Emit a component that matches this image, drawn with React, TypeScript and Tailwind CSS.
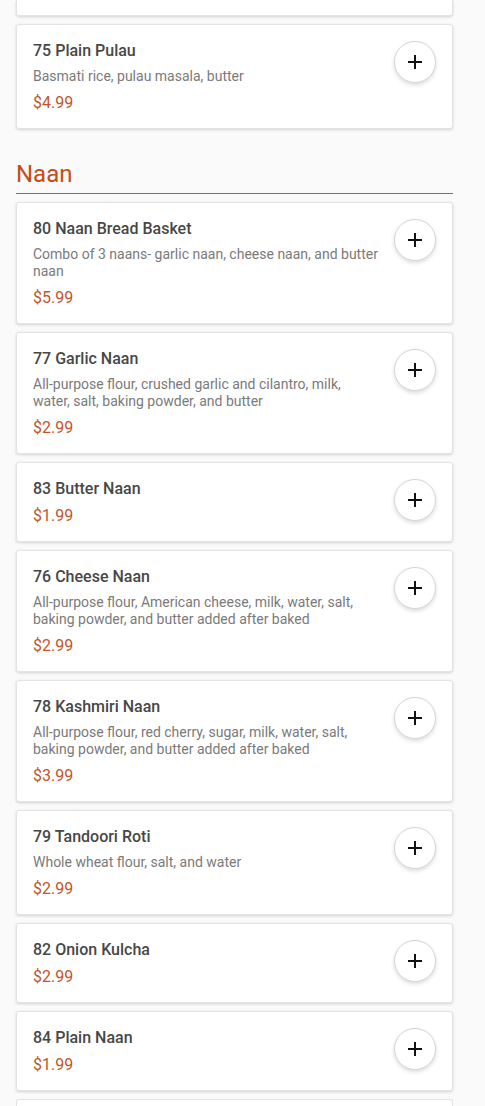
import React from 'react';

type Item = {
  name: string;
  desc?: string;
  price: string;
};

const naan: Item[] = [
  { name: '80 Naan Bread Basket', desc: 'Combo of 3 naans- garlic naan, cheese naan, and butter naan', price: '$5.99' },
  { name: '77 Garlic Naan', desc: 'All-purpose flour, crushed garlic and cilantro, milk, water, salt, baking powder, and butter', price: '$2.99' },
  { name: '83 Butter Naan', price: '$1.99' },
  { name: '76 Cheese Naan', desc: 'All-purpose flour, American cheese, milk, water, salt, baking powder, and butter added after baked', price: '$2.99' },
  { name: '78 Kashmiri Naan', desc: 'All-purpose flour, red cherry, sugar, milk, water, salt, baking powder, and butter added after baked', price: '$3.99' },
  { name: '79 Tandoori Roti', desc: 'Whole wheat flour, salt, and water', price: '$2.99' },
  { name: '82 Onion Kulcha', price: '$2.99' },
  { name: '84 Plain Naan', price: '$1.99' },
];

const PlusIcon = () => (
  <svg width="18" height="18" viewBox="0 0 18 18" fill="none">
    <path d="M9 2v14M2 9h14" stroke="#111" strokeWidth="2" />
  </svg>
);

const MenuCard: React.FC<{ item: Item }> = ({ item }) => (
  <div className="flex gap-4 p-4 bg-white border border-[#e3e3e3] rounded-[3px] shadow-[0_1px_3px_rgba(0,0,0,0.16)]">
    <div className="flex-1 min-w-0">
      <div className="text-[16px] leading-[19px] font-medium text-[#474747]">{item.name}</div>
      {item.desc && (
        <div className="mt-2 text-[14px] leading-[17px] text-[#7a7a7a]">{item.desc}</div>
      )}
      <div className="mt-2 text-[16px] leading-[19px] text-[#c2552a]">{item.price}</div>
    </div>
    <button className="w-[42px] h-[42px] shrink-0 rounded-full bg-white border border-[#d6d6d6] shadow-[0_2px_4px_rgba(0,0,0,0.14)] flex items-center justify-center">
      <PlusIcon />
    </button>
  </div>
);

export default function App() {
  return (
    <div className="h-[1106px] overflow-hidden bg-[#fafafa] font-['Roboto',sans-serif]">
      <div className="ml-4 w-[437px]">
        <div className="h-4 bg-white border border-t-0 border-[#e3e3e3] rounded-b-[3px] shadow-[0_1px_3px_rgba(0,0,0,0.16)]" />
        <div className="mt-2">
          <MenuCard item={{ name: '75 Plain Pulau', desc: 'Basmati rice, pulau masala, butter', price: '$4.99' }} />
        </div>

        <h2 className="mt-[29px] pb-[3px] mb-2 text-[24px] leading-[32px] font-normal text-[#c44d16] border-b border-solid border-b-[#c8561f]">
          Naan
        </h2>

        <div className="flex flex-col gap-2">
          {naan.map((item) => (
            <MenuCard key={item.name} item={item} />
          ))}
          <div className="h-4 bg-white border border-b-0 border-[#e3e3e3] rounded-t-[3px]" />
        </div>
      </div>
    </div>
  );
}
